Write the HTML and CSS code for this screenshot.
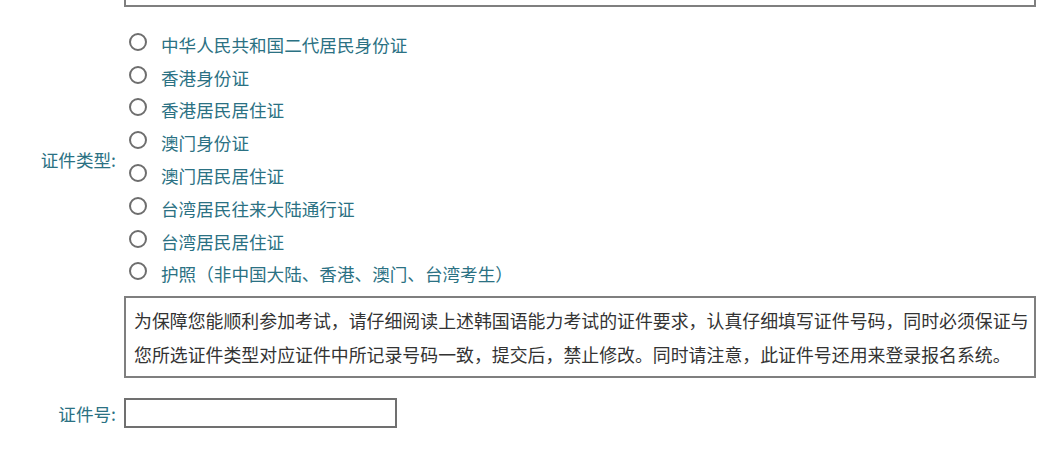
FILE: index.html
```html
<!DOCTYPE html>
<html lang="zh-CN">
<head>
    <meta charset="UTF-8">
    <meta name="viewport" content="width=device-width, initial-scale=1.0">
    <title>证件信息</title>
    <link rel="stylesheet" href="styles.css">
</head>
<body>
    <div class="form">
        <div class="form-row">
            <div class="label"></div>
            <div class="prev-box"></div>
        </div>

        <div class="form-row type-row">
            <div class="label">证件类型:</div>
            <ul class="radio-list">
                <li><span class="radio"></span>中华人民共和国二代居民身份证</li>
                <li><span class="radio"></span>香港身份证</li>
                <li><span class="radio"></span>香港居民居住证</li>
                <li><span class="radio"></span>澳门身份证</li>
                <li><span class="radio"></span>澳门居民居住证</li>
                <li><span class="radio"></span>台湾居民往来大陆通行证</li>
                <li><span class="radio"></span>台湾居民居住证</li>
                <li><span class="radio"></span>护照（非中国大陆、香港、澳门、台湾考生）</li>
            </ul>
        </div>

        <div class="form-row">
            <div class="label"></div>
            <div class="note">为保障您能顺利参加考试，请仔细阅读上述韩国语能力考试的证件要求，认真仔细填写证件号码，同时必须保证与<br>您所选证件类型对应证件中所记录号码一致，提交后，禁止修改。同时请注意，此证件号还用来登录报名系统。</div>
        </div>

        <div class="form-row id-row">
            <div class="label">证件号:</div>
            <input type="text" class="id-input">
        </div>
    </div>
</body>
</html>
```

FILE: styles.css
```css
/* 证件信息表单 */
body {
    margin: 0;
    background-color: #fff;
    font-family: "Noto Sans CJK SC", "Microsoft YaHei", sans-serif;
}
.form {
    width: 1060px;
}
.form-row {
    display: grid;
    grid-template-columns: 124px 912px;
    align-items: center;
}
.label {
    text-align: right;
    padding-right: 8px;
    font-size: 17.6px;
    color: #2b7183;
}
.prev-box {
    height: 5px;
    border: 2px solid #7f7f7f;
    border-top: none;
}
.type-row {
    margin-top: 21px;
}
.radio-list {
    list-style: none;
    margin: 0;
    padding: 0;
}
.radio-list li {
    display: flex;
    align-items: center;
    height: 32.8px;
    font-size: 17.6px;
    color: #2b7183;
}
.radio {
    width: 14px;
    height: 14px;
    border: 2px solid #6e6e6e;
    border-radius: 50%;
    margin: 0 14px 5px 5px;
    flex-shrink: 0;
}
.note {
    margin-top: 6px;
    border: 2px solid #7f7f7f;
    padding: 5px 0 5px 8px;
    font-size: 17.9px;
    line-height: 34px;
    color: #333;
    white-space: nowrap;
    overflow: hidden;
}
.id-row {
    margin-top: 20px;
}
.id-input {
    width: 273px;
    height: 30px;
    box-sizing: border-box;
    border: 2px solid #707070;
    margin: 0;
    padding: 0 4px;
    outline: none;
}
```
